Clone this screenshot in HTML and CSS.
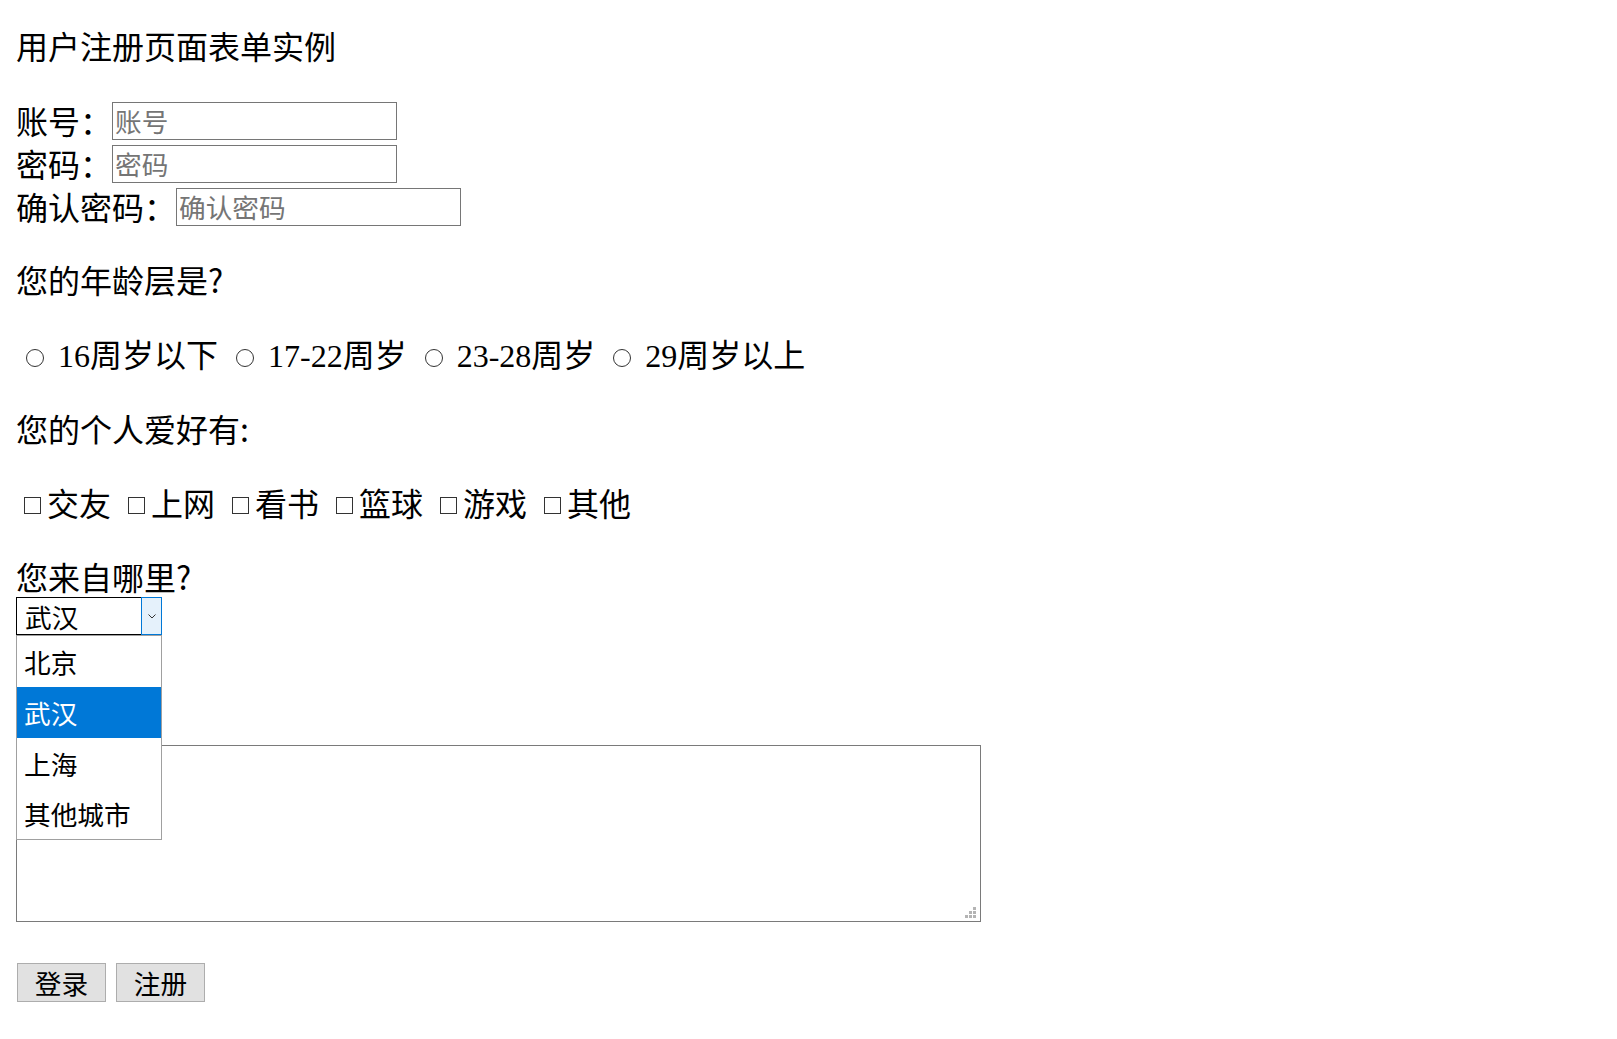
FILE: index.html
```html
<!DOCTYPE html>
<html lang="zh-CN">
<head>
<meta charset="utf-8">
<title>用户注册页面表单实例</title>
<link rel="stylesheet" href="styles.css">
</head>
<body>
<div class="page">
  <div class="title">用户注册页面表单实例</div>

  <div class="fields">
    <div class="row"><span class="lbl">账号：</span><input class="txt" type="text" placeholder="账号"></div>
    <div class="row"><span class="lbl">密码：</span><input class="txt" type="text" placeholder="密码"></div>
    <div class="row"><span class="lbl">确认密码：</span><input class="txt" type="text" placeholder="确认密码"></div>
  </div>

  <div class="q q-age">您的年龄层是?</div>
  <div class="opts opts-radio">
    <span class="item"><span class="radio"></span>16周岁以下</span>
    <span class="item"><span class="radio"></span>17-22周岁</span>
    <span class="item"><span class="radio"></span>23-28周岁</span>
    <span class="item"><span class="radio"></span>29周岁以上</span>
  </div>

  <div class="q q-hobby">您的个人爱好有:</div>
  <div class="opts opts-check">
    <span class="item"><span class="check"></span>交友</span>
    <span class="item"><span class="check"></span>上网</span>
    <span class="item"><span class="check"></span>看书</span>
    <span class="item"><span class="check"></span>篮球</span>
    <span class="item"><span class="check"></span>游戏</span>
    <span class="item"><span class="check"></span>其他</span>
  </div>

  <div class="q q-from">您来自哪里?</div>
  <div class="select-wrap">
    <div class="select">
      <span class="select-value">武汉</span>
      <span class="select-btn">
        <svg width="8" height="5" viewBox="0 0 8 5"><path d="M0.5 0.5 L4 4 L7.5 0.5" fill="none" stroke="#333" stroke-width="1"/></svg>
      </span>
    </div>
    <ul class="dropdown">
      <li class="opt">北京</li>
      <li class="opt opt-sel">武汉</li>
      <li class="opt">上海</li>
      <li class="opt">其他城市</li>
    </ul>
  </div>

  <div class="ta-wrap">
    <textarea class="ta"></textarea>
    <span class="grip">
      <i class="d d1"></i><i class="d d2"></i><i class="d d3"></i><i class="d d4"></i><i class="d d5"></i><i class="d d6"></i>
    </span>
  </div>

  <div class="buttons">
    <button class="btn" type="button">登录</button>
    <button class="btn" type="button">注册</button>
  </div>
</div>
</body>
</html>
```

FILE: styles.css
```css
html, body {
  margin: 0;
  padding: 0;
  background: #fff;
}

body {
  font-family: "Liberation Serif", "Noto Sans CJK SC", serif;
  font-size: 32px;
  color: #000;
}

.page {
  padding: 24px 0 0 16px;
}

.title {
  height: 43px;
  line-height: 43px;
  font-family: "Noto Sans CJK SC", sans-serif;
}

.fields {
  margin-top: 32px;
}

.row {
  display: flex;
  align-items: center;
  height: 43px;
}

.lbl {
  font-family: "Noto Sans CJK SC", sans-serif;
  line-height: 43px;
}

.txt {
  box-sizing: border-box;
  width: 285px;
  height: 38px;
  margin: 0;
  padding: 0 2px;
  border: 1px solid #767676;
  font-family: "Noto Sans CJK SC", sans-serif;
  font-size: 26.67px;
  color: #000;
  outline: none;
}

.txt::placeholder {
  color: #757575;
}

.q {
  height: 43px;
  line-height: 43px;
  white-space: nowrap;
  font-family: "Noto Sans CJK SC", sans-serif;
}

.q-age {
  margin-top: 30px;
}

.opts {
  display: flex;
  align-items: center;
  height: 43px;
  white-space: nowrap;
}

.opts-radio {
  margin-top: 34px;
  gap: 8px;
}

.q-hobby {
  margin-top: 29px;
}

.opts-check {
  margin-top: 31px;
  gap: 9px;
  font-family: "Noto Sans CJK SC", sans-serif;
}

.item {
  display: inline-flex;
  align-items: center;
  line-height: 43px;
}

.q-from {
  margin-top: 31px;
}

.radio {
  display: inline-block;
  box-sizing: border-box;
  width: 18px;
  height: 18px;
  margin: 2px 14px 0 10px;
  border: 1px solid #333;
  border-radius: 50%;
}

.check {
  display: inline-block;
  box-sizing: border-box;
  width: 17px;
  height: 17px;
  margin: 6px 6px 0 8px;
  border: 1px solid #333;
}

.select-wrap {
  position: relative;
  width: 146px;
  height: 38px;
  margin-top: -1px;
}

.select {
  box-sizing: border-box;
  display: flex;
  height: 38px;
  border: 1px solid #000;
  border-right: none;
  font-family: "Noto Sans CJK SC", sans-serif;
  font-size: 26.67px;
}

.select-value {
  flex: 1;
  padding-left: 8px;
  line-height: 38px;
}

.select-btn {
  box-sizing: border-box;
  width: 21px;
  margin-top: -1px;
  margin-bottom: -1px;
  border: 1px solid #0078d7;
  background: #e5f1fb;
  display: flex;
  align-items: center;
  justify-content: center;
}

.dropdown {
  position: absolute;
  left: 0;
  top: 38px;
  z-index: 2;
  box-sizing: border-box;
  width: 146px;
  margin: 0;
  padding: 0;
  list-style: none;
  background: #fff;
  border: 1px solid #a0a0a0;
  font-family: "Noto Sans CJK SC", sans-serif;
  font-size: 26.67px;
}

.opt {
  height: 50.75px;
  line-height: 52px;
  padding-left: 7px;
  color: #000;
}

.opt-sel {
  background: #0078d7;
  color: #fff;
}

.ta-wrap {
  position: relative;
  width: 965px;
  height: 177px;
  margin-top: 110px;
}

.ta {
  display: block;
  box-sizing: border-box;
  width: 100%;
  height: 100%;
  margin: 0;
  border: 1px solid #7a7a7a;
  resize: none;
  outline: none;
}

.grip {
  position: absolute;
  right: 4px;
  bottom: 3px;
  width: 12px;
  height: 12px;
}

.d {
  position: absolute;
  width: 3px;
  height: 3px;
  background: #b4b4b4;
}

.d1 { left: 8px; top: 0; }
.d2 { left: 4px; top: 4px; }
.d3 { left: 8px; top: 4px; }
.d4 { left: 0; top: 8px; }
.d5 { left: 4px; top: 8px; }
.d6 { left: 8px; top: 8px; }

.buttons {
  display: flex;
  gap: 10px;
  margin-top: 41px;
  padding-left: 1px;
}

.btn {
  box-sizing: border-box;
  width: 89px;
  height: 39px;
  margin: 0;
  padding: 0;
  background: #e1e1e1;
  border: 1px solid #adadad;
  font-family: "Noto Sans CJK SC", sans-serif;
  font-size: 26.67px;
  line-height: 37px;
  color: #000;
}
```
